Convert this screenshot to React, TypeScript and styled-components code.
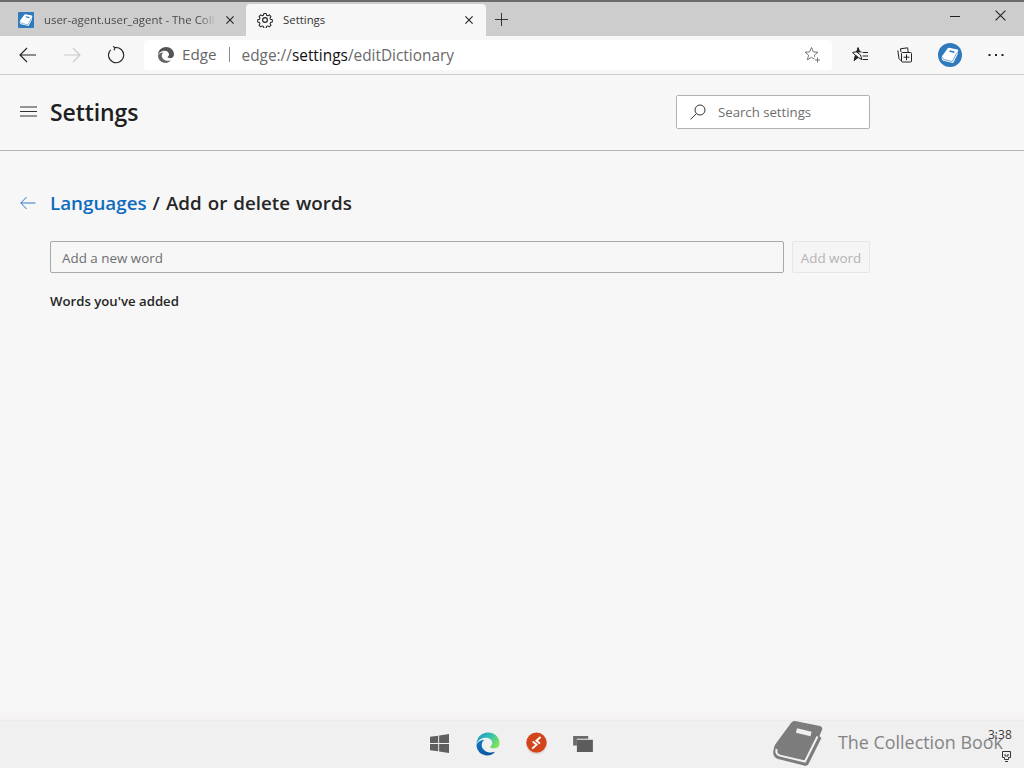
import React from "react";
import styled, { createGlobalStyle } from "styled-components";

const GlobalStyle = createGlobalStyle`
  html, body {
    margin: 0;
    padding: 0;
    background: #f7f7f7;
  }
  * {
    box-sizing: border-box;
  }
`;

const Page = styled.div`
  width: 1024px;
  height: 768px;
  display: flex;
  flex-direction: column;
  overflow: hidden;
  font-family: "Open Sans", "Noto Sans", sans-serif;
  color: #202020;
`;

const TabStrip = styled.div`
  height: 36px;
  flex: none;
  display: flex;
  align-items: flex-end;
  background: #cdcdcd;
  border-top: 2px solid #6b6b6b;
`;

const Tab = styled.div<{ $active?: boolean }>`
  width: ${(p) => (p.$active ? "240px" : "246px")};
  height: 32px;
  flex: none;
  display: flex;
  align-items: center;
  padding: ${(p) => (p.$active ? "0 13px 0 11px" : "0 12px 0 18px")};
  border-radius: 4px 4px 0 0;
  background: ${(p) => (p.$active ? "#f7f7f7" : "transparent")};
`;

const TabIcon = styled.div`
  width: 16px;
  height: 16px;
  flex: none;
  display: flex;
`;

const TabTitle = styled.span<{ $muted?: boolean }>`
  flex: 1;
  min-width: 0;
  margin: 0 ${(p) => (p.$muted ? "10px" : "0")} 0 10px;
  font-size: 11.4px;
  line-height: 16px;
  white-space: nowrap;
  overflow: hidden;
  color: ${(p) => (p.$muted ? "#4a4a4a" : "#333333")};
  ${(p) =>
    p.$muted
      ? `-webkit-mask-image: linear-gradient(to right, #000 90%, transparent 100%);
         mask-image: linear-gradient(to right, #000 90%, transparent 100%);`
      : ""}
`;

const IconSlot = styled.div<{ $w?: number; $h?: number }>`
  width: ${(p) => p.$w ?? 16}px;
  height: ${(p) => p.$h ?? 16}px;
  flex: none;
  display: flex;
  align-items: center;
  justify-content: center;
`;

const NewTab = styled(IconSlot)`
  margin: 0 0 0 9px;
  align-self: center;
`;

const WindowControls = styled.div`
  margin-left: auto;
  align-self: flex-start;
  display: flex;
  align-items: center;
  gap: 35px;
  padding: 8px 18px 0 0;
`;

const Toolbar = styled.div`
  height: 39px;
  flex: none;
  display: flex;
  align-items: center;
  background: #f7f7f7;
  border-bottom: 1px solid #cccccc;
  padding: 0 0 1px 19px;
`;

const NavGroup = styled.div`
  display: flex;
  align-items: center;
  gap: 26px;
  margin-right: 19px;
`;

const AddressBar = styled.div`
  width: 688px;
  height: 30px;
  flex: none;
  display: flex;
  align-items: center;
  padding: 0 12px 0 14px;
  background: #ffffff;
  border-radius: 4px;
`;

const SiteName = styled.span`
  margin: 0 0 2px 8px;
  font-size: 15.2px;
  color: #666666;
`;

const Divider = styled.span`
  width: 1px;
  height: 15px;
  margin: 0 12px 0 12px;
  background: #8a8a8a;
`;

const Url = styled.span`
  flex: 1;
  margin-top: 2px;
  font-size: 15.4px;
  color: #6a6a6a;
  strong {
    font-weight: 400;
    color: #111111;
  }
`;

const ToolbarActions = styled.div`
  display: flex;
  align-items: center;
  margin-left: 20px;
`;

const ActionSlot = styled(IconSlot)<{ $gap: number }>`
  margin-right: ${(p) => p.$gap}px;
`;

const SettingsHeader = styled.header`
  height: 76px;
  flex: none;
  display: flex;
  align-items: center;
  padding: 0 154px 2px 20px;
  border-bottom: 1px solid #b4b4b4;
`;

const PageTitle = styled.h1`
  margin: 0 0 0 13px;
  font-size: 23px;
  font-weight: 600;
  letter-spacing: -0.1px;
  color: #202020;
`;

const SearchBox = styled.div`
  margin-left: auto;
  width: 194px;
  height: 34px;
  display: flex;
  align-items: center;
  gap: 12px;
  padding: 0 0 0 13px;
  background: #ffffff;
  border: 1px solid #b2b2b2;
  border-radius: 2px;
  font-size: 13.2px;
  color: #6e6e6e;
`;

const Content = styled.main`
  flex: 1;
  padding: 36px 154px 0 20px;
  background: #f7f7f7;
`;

const Breadcrumb = styled.div`
  display: flex;
  align-items: center;
  height: 32px;
`;

const BackArrow = styled(IconSlot)`
  margin-right: 14px;
`;

const Heading = styled.h2`
  margin: 0;
  font-size: 18.8px;
  font-weight: 600;
  word-spacing: 1.1px;
  color: #262626;
  a {
    color: #0f6cbd;
    text-decoration: none;
  }
`;

const WordForm = styled.div`
  display: flex;
  margin: 22px 0 0 30px;
  gap: 8px;
`;

const WordInput = styled.div`
  flex: 1;
  height: 32px;
  display: flex;
  align-items: center;
  padding: 1px 11px 0;
  border: 1px solid #a9a9a9;
  border-radius: 2px;
  font-size: 13.4px;
  color: #6e6e6e;
`;

const AddButton = styled.div`
  width: 78px;
  height: 32px;
  display: flex;
  align-items: center;
  justify-content: center;
  padding-top: 1px;
  background: #f5f5f5;
  border: 1px solid #e6e6e6;
  border-radius: 2px;
  font-size: 13.4px;
  color: #b4b4b4;
`;

const SectionLabel = styled.div`
  margin: 19px 0 0 30px;
  font-size: 13.2px;
  font-weight: 600;
  line-height: 18px;
  color: #262626;
`;

const TaskbarFade = styled.div`
  height: 10px;
  flex: none;
  margin-top: -2px;
  background: linear-gradient(#f7f7f7, #f5f1f4);
`;

const Taskbar = styled.footer`
  position: relative;
  height: 48px;
  flex: none;
  display: flex;
  align-items: center;
  justify-content: center;
  gap: 27px;
  padding: 0 2px 2px 0;
  background: #f0f0f0;
  border-top: 1px solid #eeeaec;
`;

const RemoteSlot = styled(IconSlot)`
  margin: 0 -1px;
`;

const Watermark = styled.div`
  position: absolute;
  left: 773px;
  top: -1px;
  display: flex;
  align-items: center;
  gap: 15px;
  font-size: 17.9px;
  color: #848484;
  white-space: nowrap;
`;

const WatermarkText = styled.span`
  margin-bottom: 2px;
`;

const Clock = styled.div`
  position: absolute;
  left: 988px;
  top: 7px;
  font-size: 12px;
  line-height: 14px;
  color: #3c3c3c;
`;

const TrayIcon = styled.div`
  position: absolute;
  left: 1002px;
  top: 30px;
  display: flex;
`;

// book silhouette drawn in a 50x46 box, reused by favicon, avatar and watermark
const BookShape = ({ fill, cut }: { fill: string; cut: string }) => (
  <>
    <path
      d="M22 1 L47 6 Q50 7 49 10 L46.4 16 L48.4 18 L36 43 Q35 46.5 31 45.5 L5 39 Q-1 37 0.5 30 L1 28 Q2 24 4 22 L18 3 Q20 0.5 22 1 Z"
      fill={fill}
    />
    <path d="M3.5 29 Q2.5 34.5 7 35.6 L32 41.5 L44.5 16.5" fill="none" stroke={cut} strokeWidth="2" />
    <path d="M23.5 10.5 L38 14" stroke={cut} strokeWidth="4.5" />
  </>
);

const BookFavicon = () => (
  <svg width="16" height="16" viewBox="0 0 16 16">
    <rect width="16" height="16" rx="1" fill="#2f79bd" />
    <g transform="translate(1.6 2) scale(0.26)">
      <BookShape fill="#ffffff" cut="#2f79bd" />
    </g>
  </svg>
);

const ProfileAvatar = () => (
  <svg width="24" height="24" viewBox="0 0 24 24">
    <circle cx="12" cy="12" r="12" fill="#2f79bd" />
    <g transform="translate(3.5 4.4) scale(0.34)">
      <BookShape fill="#ffffff" cut="#2f79bd" />
    </g>
  </svg>
);

const GearIcon = () => (
  <svg width="16" height="16" viewBox="0 0 24 24" fill="none" stroke="#222222" strokeWidth="1.7" strokeLinejoin="round">
    <circle cx="12" cy="12" r="3.6" />
    <path d="M10 1.2 h4 l.7 3 1.9 .8 2.6-1.6 2.8 2.8-1.6 2.6 .8 1.9 3 .7 v4 l-3 .7-.8 1.9 1.6 2.6-2.8 2.8-2.6-1.6-1.9 .8-.7 3 h-4 l-.7-3-1.9-.8-2.6 1.6-2.8-2.8 1.6-2.6-.8-1.9-3-.7 v-4 l3-.7 .8-1.9-1.6-2.6 2.8-2.8 2.6 1.6 1.9-.8 Z" transform="translate(1.2 1.2) scale(.9)" />
  </svg>
);

const CloseIcon = ({ size = 8 }: { size?: number }) => (
  <svg width={size} height={size} viewBox="0 0 10 10" stroke="#222222" strokeWidth={11 / size} fill="none">
    <path d="M0.5 0.5 L9.5 9.5 M9.5 0.5 L0.5 9.5" />
  </svg>
);

const ArrowIcon = ({ color, dir = "left" }: { color: string; dir?: "left" | "right" }) => (
  <svg width="18" height="18" viewBox="0 0 18 18" fill="none" stroke={color} strokeWidth="1.1">
    <path d={dir === "left" ? "M1 9 H17 M8 2 L1 9 L8 16" : "M1 9 H17 M10 2 L17 9 L10 16"} />
  </svg>
);

const EdgeMono = () => (
  <svg width="16" height="16" viewBox="0 0 16 16">
    <path d="M8 0 C12.6 0 16 3.2 16 7.6 C16 10 14.2 11.2 12.2 11.2 C10.6 11.2 9.6 10.6 9.4 10 C10.6 9.4 11 8.4 11 7.6 C11 5.4 9 3.8 6.6 3.8 C3.6 3.8 1 5.6 0 8.2 C0 3.6 3.4 0 8 0 Z" fill="#555555" />
    <path d="M0 8.6 C1 6.4 3.2 5.2 5.6 5.4 C4.2 6.2 3.6 7.6 3.8 9.2 C4.2 12.4 8.4 14.8 12.8 13.2 C11.4 15 9.6 16 7.6 16 C3.4 16 0 12.8 0 8.6 Z" fill="#666666" />
  </svg>
);

const EdgeColor = () => (
  <svg width="24" height="24" viewBox="0 0 25 25">
    <defs>
      <linearGradient id="edgeTop" x1="0" y1="0" x2="1" y2="0.6">
        <stop offset="0" stopColor="#1e90c8" />
        <stop offset="0.55" stopColor="#35c1b1" />
        <stop offset="1" stopColor="#7fe35c" />
      </linearGradient>
      <linearGradient id="edgeBottom" x1="0" y1="0" x2="1" y2="1">
        <stop offset="0" stopColor="#0f78c8" />
        <stop offset="1" stopColor="#0b4d95" />
      </linearGradient>
    </defs>
    <path d="M12.5 0.5 C19.4 0.5 24.5 5.4 24.5 11.8 C24.5 15.4 21.8 17.2 18.8 17.2 C16.4 17.2 14.8 16.2 14.6 15.4 C16.2 14.6 17 13 17 11.8 C17 8.4 14 6 10.4 6 C5.8 6 1.8 8.8 0.5 12.8 C0.5 5.8 5.6 0.5 12.5 0.5 Z" fill="url(#edgeTop)" />
    <path d="M0.5 13.4 C2 10 5.2 8.2 8.8 8.4 C6.6 9.6 5.8 11.8 6 14.2 C6.6 19.2 13 23 19.8 20.6 C17.8 23.2 15 24.5 12 24.5 C5.4 24.5 0.5 19.8 0.5 13.4 Z" fill="url(#edgeBottom)" />
  </svg>
);

const RemoteIcon = () => (
  <svg width="21" height="23" viewBox="0 0 21 23">
    <ellipse cx="10.5" cy="12.4" rx="10.4" ry="10.4" fill="#dedbd8" />
    <circle cx="10.5" cy="10.6" r="10.2" fill="#d2451b" />
    <path d="M14.6 5 L10.4 8.8 L14 11.6 M6.6 9.6 L10.6 12.6 L6.2 16.6" fill="none" stroke="#ffffff" strokeWidth="1.9" />
  </svg>
);

const Hamburger = () => (
  <svg width="17" height="11" viewBox="0 0 17 11" stroke="#333333" strokeWidth="1">
    <path d="M0 1 H17 M0 5.5 H17 M0 10 H17" />
  </svg>
);

const App: React.FC = () => {
  return (
    <Page>
      <GlobalStyle />
      <TabStrip>
        <Tab>
          <TabIcon>
            <BookFavicon />
          </TabIcon>
          <TabTitle $muted>user-agent.user_agent - The Collection Book</TabTitle>
          <IconSlot $w={8} $h={8}>
            <CloseIcon />
          </IconSlot>
        </Tab>
        <Tab $active>
          <TabIcon>
            <GearIcon />
          </TabIcon>
          <TabTitle>Settings</TabTitle>
          <IconSlot $w={8} $h={8}>
            <CloseIcon />
          </IconSlot>
        </Tab>
        <NewTab $w={13} $h={13}>
          <svg width="13" height="13" viewBox="0 0 13 13" stroke="#333333" strokeWidth="1">
            <path d="M6.5 0 V13 M0 6.5 H13" />
          </svg>
        </NewTab>
        <WindowControls>
          <IconSlot $w={10} $h={10}>
            <svg width="10" height="10" viewBox="0 0 10 10" stroke="#222222" strokeWidth="1">
              <path d="M0 5.5 H10" />
            </svg>
          </IconSlot>
          <IconSlot $w={11} $h={11}>
            <CloseIcon size={11} />
          </IconSlot>
        </WindowControls>
      </TabStrip>

      <Toolbar>
        <NavGroup>
          <IconSlot $w={18} $h={18}>
            <ArrowIcon color="#222222" />
          </IconSlot>
          <IconSlot $w={18} $h={18}>
            <ArrowIcon color="#c9c9c9" dir="right" />
          </IconSlot>
          <IconSlot $w={18} $h={18}>
            <svg width="18" height="18" viewBox="0 0 18 18" fill="none" stroke="#222222" strokeWidth="1.1">
              <path d="M7.6 1.6 A7.6 7.6 0 1 1 3.6 3.8" />
              <path d="M6 0.4 L8 1.7 L7 4.4" />
            </svg>
          </IconSlot>
        </NavGroup>
        <AddressBar>
          <EdgeMono />
          <SiteName>Edge</SiteName>
          <Divider />
          <Url>
            edge://<strong>settings</strong>/editDictionary
          </Url>
          <IconSlot $w={16} $h={16}>
            <svg width="16" height="16" viewBox="0 0 16 16" fill="none" stroke="#666666" strokeWidth="0.9">
              <path d="M7.5 0.5 L9.3 4.9 L14 5.2 L10.4 8.2 L11.6 12.8 L7.5 10.3 L3.4 12.8 L4.6 8.2 L1 5.2 L5.7 4.9 Z" />
              <rect x="10.5" y="9.8" width="5.5" height="6" fill="#ffffff" stroke="none" />
              <path d="M11 13 H16 M13.5 10.5 V15.5" />
            </svg>
          </IconSlot>
        </AddressBar>
        <ToolbarActions>
          <ActionSlot $w={16} $h={16} $gap={29}>
            <svg width="16" height="16" viewBox="0 0 16 16" fill="none" stroke="#222222" strokeWidth="1">
              <path d="M6 0.5 L7.5 4.8 L9.6 5 M8.6 8 L9 9.6 L9.8 12.6 L6 10.4 L2.2 13.6 L3.4 8.4 L0.6 5.4 L4.5 4.8 Z" />
              <path d="M6 0.8 L4.6 5 L7.4 5 Z" fill="#222222" />
              <path d="M2.4 13.4 L3.6 8.2 L6 10.2 Z" fill="#222222" />
              <path d="M10.6 5.5 H16 M10.6 9 H16 M10.6 12.5 H16" />
            </svg>
          </ActionSlot>
          <ActionSlot $w={16} $h={16} $gap={25}>
            <svg width="16" height="16" viewBox="0 0 16 16" fill="none" stroke="#222222" strokeWidth="1">
              <path d="M4 5 L3.4 1.8 L10.6 0.8 L11.2 5" />
              <path d="M0.8 3.4 L2 11.6 L4.4 14" />
              <rect x="4.5" y="5.5" width="10" height="9.5" rx="1" />
              <path d="M9.5 7.4 V13.2 M6.6 10.2 H12.4" />
            </svg>
          </ActionSlot>
          <ActionSlot $w={24} $h={24} $gap={26}>
            <ProfileAvatar />
          </ActionSlot>
          <IconSlot $w={16} $h={16}>
            <svg width="16" height="4" viewBox="0 0 16 4" fill="#222222">
              <rect x="0.5" y="1" width="2" height="2" />
              <rect x="7" y="1" width="2" height="2" />
              <rect x="13.5" y="1" width="2" height="2" />
            </svg>
          </IconSlot>
        </ToolbarActions>
      </Toolbar>

      <SettingsHeader>
        <Hamburger />
        <PageTitle>Settings</PageTitle>
        <SearchBox>
          <svg width="16" height="16" viewBox="0 0 16 16" fill="none" stroke="#333333" strokeWidth="1">
            <circle cx="10" cy="6" r="5" />
            <path d="M6.4 9.6 L0.6 15.4" />
          </svg>
          <span>Search settings</span>
        </SearchBox>
      </SettingsHeader>

      <Content>
        <Breadcrumb>
          <BackArrow $w={16} $h={14}>
            <svg width="16" height="14" viewBox="0 0 16 14" fill="none" stroke="#2b7cc4" strokeWidth="1">
              <path d="M0.8 7 H15.4 M6.6 1 L0.8 7 L6.6 13" />
            </svg>
          </BackArrow>
          <Heading>
            <a href="#languages">Languages</a> / Add or delete words
          </Heading>
        </Breadcrumb>
        <WordForm>
          <WordInput>Add a new word</WordInput>
          <AddButton>Add word</AddButton>
        </WordForm>
        <SectionLabel>Words you've added</SectionLabel>
      </Content>

      <TaskbarFade />
      <Taskbar>
        <IconSlot $w={19} $h={19}>
          <svg width="19" height="19" viewBox="0 0 20 20" fill="#5f5f5f">
            <path d="M0 3 L8.6 1.8 V9.4 H0 Z M9.6 1.6 L20 0 V9.4 H9.6 Z M0 10.4 H8.6 V18.2 L0 17 Z M9.6 10.4 H20 V20 L9.6 18.4 Z" />
          </svg>
        </IconSlot>
        <IconSlot $w={24} $h={24}>
          <EdgeColor />
        </IconSlot>
        <RemoteSlot $w={21} $h={23}>
          <RemoteIcon />
        </RemoteSlot>
        <IconSlot $w={20} $h={16}>
          <svg width="20" height="16" viewBox="0 0 21 17">
            <path d="M0 0 H16 V3 H4 V10 H0 Z" fill="#6a6a6a" />
            <rect x="4" y="4" width="17" height="13" fill="#5c5c5c" />
          </svg>
        </IconSlot>
        <Watermark>
          <svg width="50" height="46" viewBox="0 0 50 46">
            <BookShape fill="#7c7c7c" cut="#f0f0f0" />
          </svg>
          <WatermarkText>The Collection Book</WatermarkText>
        </Watermark>
        <Clock>3:38</Clock>
        <TrayIcon>
          <svg width="9" height="11" viewBox="0 0 9 11" fill="none" stroke="#333333" strokeWidth="1">
            <path d="M0.5 0.5 H8.5 V6.5 H6.5 V8.5 H2.5 V6.5 H0.5 Z M3 3 V5 H6 V3 M3 10.5 H6" />
          </svg>
        </TrayIcon>
      </Taskbar>
    </Page>
  );
};

export default App;
